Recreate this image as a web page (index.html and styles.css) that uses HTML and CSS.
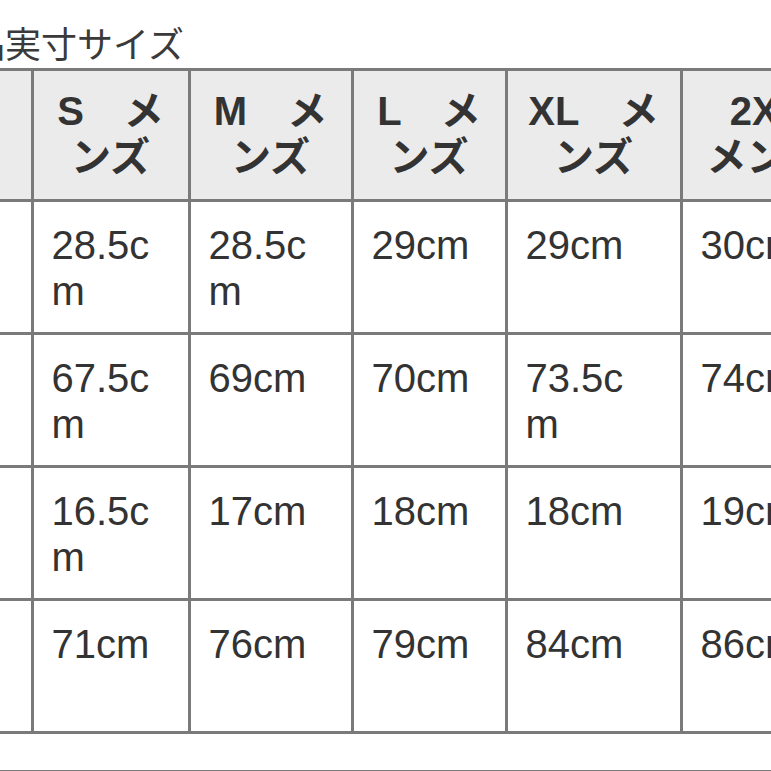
FILE: index.html
```html
<!DOCTYPE html>
<html lang="ja">
<head>
<meta charset="utf-8">
<link rel="stylesheet" href="styles.css">
</head>
<body>
<div class="page">
  <div class="title">品実寸サイズ</div>
  <table class="size-table">
    <colgroup>
      <col class="c0">
      <col class="c1">
      <col class="c2">
      <col class="c3">
      <col class="c4">
      <col class="c5">
    </colgroup>
    <thead>
      <tr>
        <th class="label"></th>
        <th>S　メンズ</th>
        <th>M　メンズ</th>
        <th>L　メンズ</th>
        <th>XL　メンズ</th>
        <th>2XL　メンズ</th>
      </tr>
    </thead>
    <tbody>
      <tr>
        <td class="label"></td>
        <td>28.5cm</td>
        <td>28.5cm</td>
        <td>29cm</td>
        <td>29cm</td>
        <td>30cm</td>
      </tr>
      <tr>
        <td class="label"></td>
        <td>67.5cm</td>
        <td>69cm</td>
        <td>70cm</td>
        <td>73.5cm</td>
        <td>74cm</td>
      </tr>
      <tr>
        <td class="label"></td>
        <td>16.5cm</td>
        <td>17cm</td>
        <td>18cm</td>
        <td>18cm</td>
        <td>19cm</td>
      </tr>
      <tr>
        <td class="label"></td>
        <td>71cm</td>
        <td>76cm</td>
        <td>79cm</td>
        <td>84cm</td>
        <td>86cm</td>
      </tr>
    </tbody>
  </table>
  <div class="next-rule"></div>
</div>
</body>
</html>
```

FILE: styles.css
```css
html, body {
  margin: 0;
  padding: 0;
  background: #ffffff;
}

.page {
  width: 771px;
  height: 771px;
  overflow: hidden;
  font-family: "Liberation Sans", "Noto Sans CJK JP", sans-serif;
  color: #333333;
}

.title {
  font-family: "Noto Sans CJK JP", sans-serif;
  font-size: 36px;
  line-height: 36px;
  height: 36px;
  padding-top: 24px;
  margin-bottom: 8px;
  margin-left: -31px;
  color: #3a3a3a;
  white-space: nowrap;
}

.size-table {
  border-collapse: collapse;
  table-layout: fixed;
  width: 851px;
}

.c0 { width: 32px; }
.c1 { width: 157px; }
.c2 { width: 163px; }
.c3 { width: 154px; }
.c4 { width: 175px; }
.c5 { width: 170px; }

.size-table th,
.size-table td {
  border: 3px solid #7a7a7a;
  vertical-align: top;
  word-break: break-all;
  overflow-wrap: anywhere;
}

.size-table th {
  background: #ebebeb;
  font-weight: bold;
  font-size: 40px;
  line-height: 46px;
  height: 96px;
  padding: 17px 14px 15px;
  text-align: center;
}

.size-table td {
  background: #ffffff;
  font-weight: normal;
  font-size: 40px;
  line-height: 46px;
  height: 95px;
  padding: 20px 30px 15px 18px;
  text-align: left;
}

.size-table .label {
  border-left: none;
  padding: 0;
}

.size-table th.label {
  background: #ebebeb;
}

.next-rule {
  margin-top: 36px;
  border-top: 2px solid #7a7a7a;
}
```
